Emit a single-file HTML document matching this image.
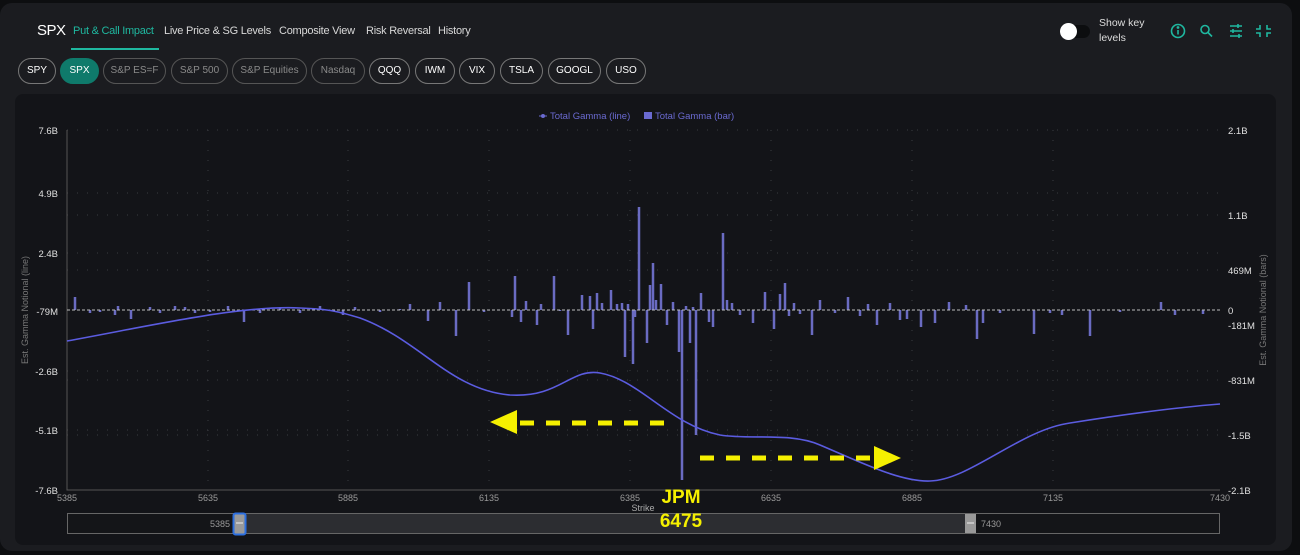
<!DOCTYPE html>
<html><head><meta charset="utf-8"><style>
body{margin:0;width:1300px;height:555px;background:#0d0e10;font-family:"Liberation Sans",sans-serif;overflow:hidden;position:relative}
.card{position:absolute;left:0;top:3px;width:1292px;height:548px;background:#1b1c20;border-radius:12px}
.nav{position:absolute;top:25px;font-size:11px;letter-spacing:-0.25px;color:#d8d8d8;white-space:nowrap}
.pill{position:absolute;top:58px;height:24px;border:1px solid #777;border-radius:13px;color:#fff;font-size:10px;line-height:24px;text-align:center;box-sizing:content-box}
.dim{color:#8a8a8a;border-color:#555}
.panel{position:absolute;left:15px;top:94px;width:1261px;height:451px;background:#131418;border-radius:8px}
</style></head><body>
<div class="card"></div>
<div class="nav" style="left:37px;top:22px;font-size:15px;color:#fff;letter-spacing:-0.5px">SPX</div>
<div class="nav" style="left:73px;color:#1fb8a0">Put &amp; Call Impact</div>
<div style="position:absolute;left:71px;top:48px;width:88px;height:2px;background:#1fb8a0"></div>
<div class="nav" style="left:164px">Live Price &amp; SG Levels</div>
<div class="nav" style="left:279px">Composite View</div>
<div class="nav" style="left:366px">Risk Reversal</div>
<div class="nav" style="left:438px">History</div>
<div style="position:absolute;left:1060px;top:25px;width:30px;height:13px;background:#0c0d0f;border-radius:7px"></div>
<div style="position:absolute;left:1060px;top:23px;width:17px;height:17px;background:#fff;border-radius:50%"></div>
<div style="position:absolute;left:1099px;top:16px;font-size:10.5px;color:#ddd;line-height:15px">Show key<br>levels</div>
<svg style="position:absolute;left:1168px;top:20px" width="110" height="22" fill="none" stroke="#1fb8a0" stroke-width="1.6">
<circle cx="10" cy="11" r="6.5"/><line x1="10" y1="10" x2="10" y2="14.5"/><circle cx="10" cy="7.5" r="0.6" fill="#1fb8a0"/>
<circle cx="37" cy="9.5" r="4"/><line x1="40" y1="12.5" x2="44" y2="16.5"/>
<path d="M62 6h12M62 11h12M62 16h12M70 4v4M65 9v4M71 14v4"/>
<path d="M92 5v4h-4M99 5v4h4M92 17v-4h-4M99 17v-4h4"/>
</svg>
<div class="pill" style="left:18px;width:36px">SPY</div>
<div class="pill" style="left:60px;width:37px;background:#0f7a6b;border-color:#0f7a6b">SPX</div>
<div class="pill dim" style="left:103px;width:61px">S&amp;P ES=F</div>
<div class="pill dim" style="left:171px;width:55px">S&amp;P 500</div>
<div class="pill dim" style="left:232px;width:73px">S&amp;P Equities</div>
<div class="pill dim" style="left:311px;width:52px">Nasdaq</div>
<div class="pill" style="left:369px;width:39px">QQQ</div>
<div class="pill" style="left:415px;width:38px">IWM</div>
<div class="pill" style="left:459px;width:34px">VIX</div>
<div class="pill" style="left:500px;width:41px">TSLA</div>
<div class="pill" style="left:548px;width:51px">GOOGL</div>
<div class="pill" style="left:606px;width:38px">USO</div>
<div class="panel"></div>
<svg style="position:absolute;left:0;top:0" width="1300" height="555" font-family="Liberation Sans, sans-serif">
<g stroke="#3a3b40" stroke-dasharray="1 9" stroke-width="1">
<path d="M67 130H1220M67 193H1220M67 253H1220M67 371H1220M67 430H1220M67 215H1220M67 270H1220M67 380H1220M67 435H1220"/>
<path d="M208 130V490M348 130V490M489 130V490M630 130V490M771 130V490M912 130V490M1053 130V490"/>
</g>
<path d="M67 130V490H1220" stroke="#555" fill="none"/>
<g font-size="9.5" fill="#e0e0e0" text-anchor="end">
<text x="58" y="134">7.6B</text><text x="58" y="197">4.9B</text><text x="58" y="257">2.4B</text><text x="58" y="315">-79M</text><text x="58" y="375">-2.6B</text><text x="58" y="434">-5.1B</text><text x="58" y="494">-7.6B</text>
</g>
<g font-size="9.5" fill="#e0e0e0">
<text x="1228" y="134">2.1B</text><text x="1228" y="219">1.1B</text><text x="1228" y="274">469M</text><text x="1228" y="314">0</text><text x="1228" y="329">-181M</text><text x="1228" y="384">-831M</text><text x="1228" y="439">-1.5B</text><text x="1228" y="494">-2.1B</text>
</g>
<g font-size="9" fill="#999" text-anchor="middle">
<text x="67" y="501">5385</text><text x="208" y="501">5635</text><text x="348" y="501">5885</text><text x="489" y="501">6135</text><text x="630" y="501">6385</text><text x="771" y="501">6635</text><text x="912" y="501">6885</text><text x="1053" y="501">7135</text><text x="1220" y="501">7430</text>
<text x="643" y="511" font-size="9" fill="#aaa">Strike</text>
</g>
<text transform="translate(28 310) rotate(-90)" font-size="9" fill="#777" text-anchor="middle">Est. Gamma Notional (line)</text>
<text transform="translate(1266 310) rotate(-90)" font-size="9" fill="#777" text-anchor="middle">Est. Gamma Notional (bars)</text>
<g font-size="9.5" fill="#6a6ad0"><path d="M539 116h8" stroke="#6a6ad0"/><circle cx="543" cy="116" r="2" fill="#6a6ad0"/><text x="550" y="119">Total Gamma (line)</text><rect x="644" y="112" width="8" height="7"/><text x="655" y="119">Total Gamma (bar)</text></g>
<g stroke="#6a6bc2" stroke-width="2.5">
<path d="M75 310V297M90 310V313M100 310V312M115 310V315M118 310V306M131 310V319M150 310V307M160 310V313M175 310V306M185 310V307M195 310V313M210 310V312M228 310V306M244 310V322M260 310V313M280 310V308M300 310V313M320 310V306M343 310V315M355 310V307M380 310V312M400 310V309M410 310V304M428 310V321M440 310V302M456 310V336M469 310V282M484 310V312M512 310V317M515 310V276M521 310V322M526 310V301M537 310V325M541 310V304M554 310V276M560 310V311M568 310V335M582 310V295M590 310V296M593 310V329M597 310V293M602 310V303M611 310V290M617 310V304M622 310V303M625 310V357M628 310V304M633 310V364M635 310V317M639 310V207M647 310V343M650 310V285M653 310V263M656 310V300M661 310V284M667 310V325M673 310V302M679 310V352M682 310V480M686 310V306M690 310V343M693 310V307M696 310V435M701 310V293M709 310V322M713 310V327M723 310V233M727 310V300M732 310V303M740 310V315M753 310V323M765 310V292M774 310V329M780 310V294M785 310V283M789 310V316M794 310V303M800 310V314M812 310V335M820 310V300M835 310V313M848 310V297M860 310V316M868 310V304M877 310V325M890 310V303M900 310V320M907 310V319M921 310V327M935 310V323M949 310V302M966 310V305M977 310V339M983 310V323M1000 310V313M1034 310V334M1050 310V313M1062 310V315M1090 310V336M1120 310V312M1161 310V302M1175 310V315M1203 310V314"/>
</g>
<path d="M67 310H1220" stroke="#bbb" stroke-dasharray="3 2" stroke-width="1"/>
<path d="M67 341C150 326 240 305 300 308C330 309 340 312 360 318C420 340 450 390 510 395C560 398 570 368 600 373C640 380 670 425 720 435C750 440 790 432 820 445C860 462 900 482 930 481C970 480 1020 430 1070 423C1120 415 1170 408 1220 404" stroke="#5b5ce0" stroke-width="1.6" fill="none"/>
<path d="M520 423H667" stroke="#f5f000" stroke-width="5" stroke-dasharray="14 12"/>
<polygon points="490,422 517,410 517,434" fill="#f5f000"/>
<path d="M700 458H870" stroke="#f5f000" stroke-width="5" stroke-dasharray="14 12"/>
<polygon points="901,458 874,446 874,470" fill="#f5f000"/>
<rect x="67.5" y="513.5" width="1152" height="20" fill="#141518" stroke="#666"/>
<rect x="240" y="514" width="730" height="19" fill="#2c2d31"/>
<text x="230" y="527" font-size="9" fill="#999" text-anchor="end">5385</text>
<text x="981" y="527" font-size="9" fill="#999">7430</text>
<rect x="233.5" y="513.5" width="12" height="21" rx="2" fill="#999" stroke="#2c6fe0" stroke-width="2"/>
<rect x="965" y="514" width="11" height="19" fill="#999"/>
<path d="M236 523h7M967 523h7" stroke="#eee"/>
<text x="681" y="503" font-size="19" font-weight="bold" fill="#f5f000" text-anchor="middle">JPM</text>
<text x="681" y="527" font-size="19" font-weight="bold" fill="#f5f000" text-anchor="middle">6475</text>
</svg>
</body></html>
